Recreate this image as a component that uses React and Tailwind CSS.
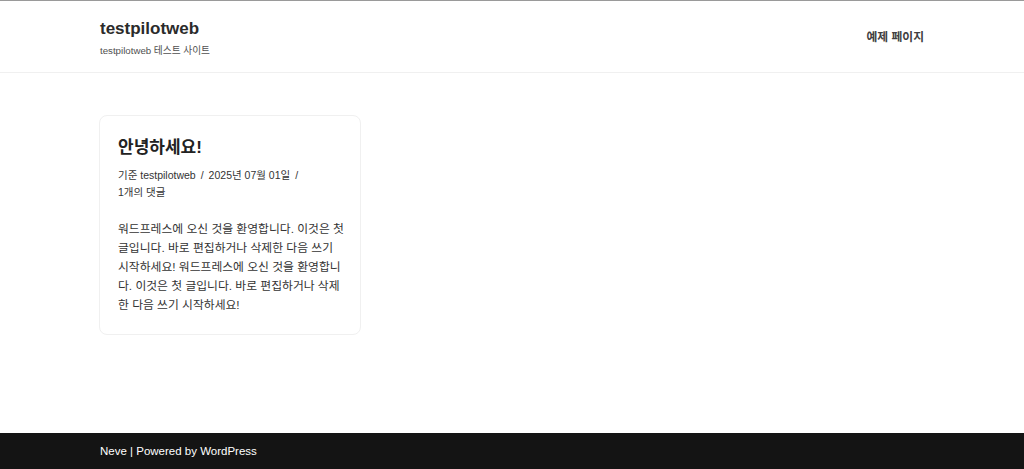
const font = { fontFamily: '"Liberation Sans", "Noto Sans CJK KR", sans-serif' }

const Header = () => (
  <header className="bg-white border-t border-[#9a9a9a] border-b border-b-[#f0f0f0]">
    <div className="w-[824px] mx-auto h-[71px] flex items-start justify-between">
      <div className="pt-[18px]">
        <h1 className="text-[17px] leading-[20px] font-bold text-[#2b2b2b]">testpilotweb</h1>
        <p className="text-[9.7px] leading-[12px] mt-[6px] text-[#505050]">testpilotweb 테스트 사이트</p>
      </div>
      <nav className="pt-[23px]">
        <a className="text-[11.8px] leading-[16px] font-bold text-[#404040]">예제 페이지</a>
      </nav>
    </div>
  </header>
)

const PostCard = () => (
  <article className="w-[262px] bg-white border border-[#f0f0f0] rounded-lg pl-[18px] pr-[14px] pt-[20px] pb-[19px]">
    <h2 className="text-[17px] leading-[24px] font-bold text-[#222]">안녕하세요!</h2>
    <div className="mt-[7px] text-[10.5px] leading-[17px] text-[#333]">
      <span>기준 testpilotweb</span>
      <span className="mx-[5px]">/</span>
      <span>2025년 07월 01일</span>
      <span className="mx-[5px]">/</span>
      <br />
      <span>1개의 댓글</span>
    </div>
    <p className="mt-[19px] text-[11.8px] leading-[19px] text-[#333]">
      워드프레스에 오신 것을 환영합니다. 이것은 첫 글입니다. 바로 편집하거나 삭제한 다음 쓰기 시작하세요! 워드프레스에 오신 것을 환영합니다. 이것은 첫 글입니다. 바로 편집하거나 삭제한 다음 쓰기 시작하세요!
    </p>
  </article>
)

export default function App() {
  return (
    <div style={font} className="w-[1024px] h-[469px] bg-white flex flex-col">
      <Header />
      <main className="flex-1">
        <div className="w-[826px] mx-auto pt-[42px]">
          <PostCard />
        </div>
      </main>
      <footer className="bg-[#141414] h-[36px]">
        <div className="w-[824px] mx-auto pt-[11px] text-[11.5px] leading-[14px] text-white">
          Neve | Powered by WordPress
        </div>
      </footer>
    </div>
  )
}
